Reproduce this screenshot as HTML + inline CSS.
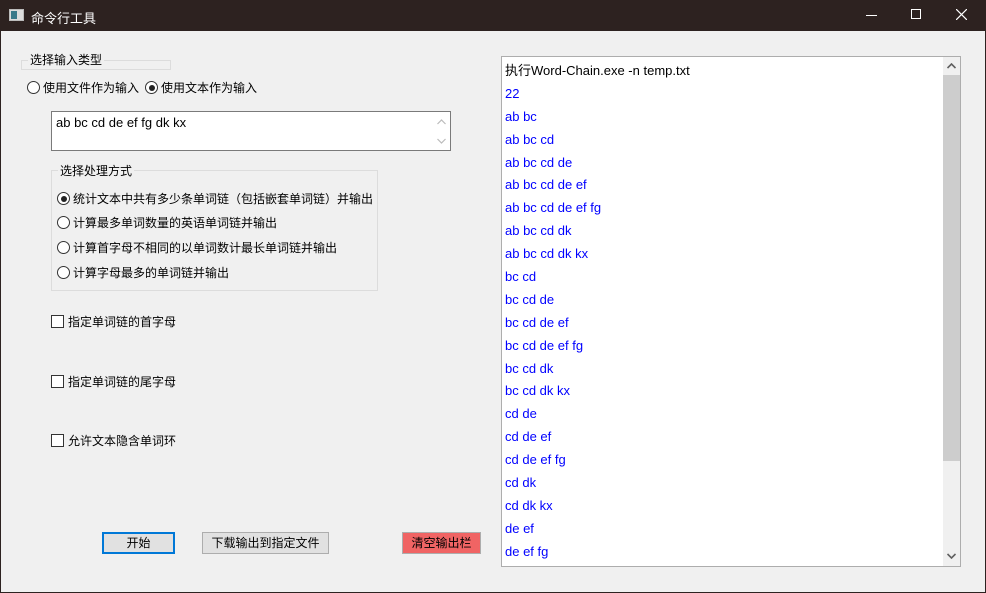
<!DOCTYPE html>
<html><head><meta charset="utf-8"><style>
*{margin:0;padding:0;box-sizing:border-box}
body{width:986px;height:593px;background:#f0f0f0;font-family:"Liberation Sans","Noto Sans CJK SC",sans-serif;font-size:12px;color:#000;position:relative;overflow:hidden}
.a{position:absolute;white-space:nowrap}
.tb{left:0;top:0;width:986px;height:31px;background:#2d2220;color:#fff}
.rad{display:inline-block;width:13px;height:13px;border:1px solid #333;border-radius:50%;background:#fff;vertical-align:-2px;margin-right:3px;position:relative}
.rad.on:after{content:"";position:absolute;left:2.5px;top:2.5px;width:6px;height:6px;border-radius:50%;background:#222}
.cb{display:inline-block;width:13px;height:13px;border:1px solid #333;background:#fff;vertical-align:-2px;margin-right:4px}
.btn{border:1px solid #adadad;background:#e1e1e1;text-align:center;line-height:20px;height:22px}
.out div{height:22.9px;line-height:22.9px;color:#0000ff;font-size:13px}
</style></head><body>
<div class="a tb">
 <div class="a" style="left:9px;top:9px;width:15px;height:12px;background:#ddd;border:1px solid #bbb"><div style="position:absolute;left:1px;top:1px;width:6px;height:8px;background:#3a7a8a"></div></div>
 <div class="a" style="left:31px;top:8px;font-size:13px">命令行工具</div>
 <div class="a" style="left:866px;top:15px;width:11px;height:1px;background:#fff"></div>
 <div class="a" style="left:911px;top:9px;width:10px;height:10px;border:1px solid #fff"></div>
 <svg class="a" style="left:956px;top:9px" width="11" height="11"><path d="M0 0L11 11M11 0L0 11" stroke="#fff" stroke-width="1.2"/></svg>
</div>
<div class="a" style="left:0;top:31px;width:1px;height:562px;background:#2d2220"></div>
<div class="a" style="left:985px;top:31px;width:1px;height:562px;background:#2d2220"></div>
<div class="a" style="left:0;top:592px;width:986px;height:1px;background:#2d2220"></div>

<div class="a" style="left:21px;top:60px;width:150px;height:10px;border:1px solid #dcdcdc"></div>
<div class="a" style="left:28px;top:51px;background:#f0f0f0;padding:0 2px">选择输入类型</div>
<div class="a" style="left:27px;top:79px"><span class="rad"></span>使用文件作为输入</div>
<div class="a" style="left:145px;top:79px"><span class="rad on"></span>使用文本作为输入</div>
<div class="a" style="left:51px;top:111px;width:400px;height:40px;border:1px solid #7a7a7a;background:#fff">
 <div class="a" style="left:4px;top:3px;font-size:13px">ab bc cd de ef fg dk kx</div>
 <svg class="a" style="left:385px;top:7px" width="9" height="6"><path d="M0.5 5L4.5 1L8.5 5" fill="none" stroke="#bbb" stroke-width="1.2"/></svg>
 <svg class="a" style="left:385px;top:26px" width="9" height="6"><path d="M0.5 1L4.5 5L8.5 1" fill="none" stroke="#bbb" stroke-width="1.2"/></svg>
</div>
<div class="a" style="left:51px;top:170px;width:327px;height:121px;border:1px solid #dcdcdc"></div>
<div class="a" style="left:58px;top:162px;background:#f0f0f0;padding:0 2px">选择处理方式</div>
<div class="a" style="left:57px;top:190px"><span class="rad on"></span>统计文本中共有多少条单词链（包括嵌套单词链）并输出</div>
<div class="a" style="left:57px;top:214px"><span class="rad"></span>计算最多单词数量的英语单词链并输出</div>
<div class="a" style="left:57px;top:239px"><span class="rad"></span>计算首字母不相同的以单词数计最长单词链并输出</div>
<div class="a" style="left:57px;top:264px"><span class="rad"></span>计算字母最多的单词链并输出</div>
<div class="a" style="left:51px;top:313px"><span class="cb"></span>指定单词链的首字母</div>
<div class="a" style="left:51px;top:373px"><span class="cb"></span>指定单词链的尾字母</div>
<div class="a" style="left:51px;top:432px"><span class="cb"></span>允许文本隐含单词环</div>

<div class="a btn" style="left:102px;top:532px;width:73px;border:2px solid #0078d7;line-height:18px">开始</div>
<div class="a btn" style="left:202px;top:532px;width:127px">下载输出到指定文件</div>
<div class="a btn" style="left:402px;top:532px;width:79px;background:#f06464">清空输出栏</div>

<div class="a" style="left:501px;top:56px;width:460px;height:511px;border:1px solid #adadad;background:#fff;overflow:hidden">
 <div class="a out" style="left:3px;top:3px">
  <div style="color:#000">执行Word-Chain.exe -n temp.txt</div>
  <div>22</div><div>ab bc</div><div>ab bc cd</div><div>ab bc cd de</div><div>ab bc cd de ef</div><div>ab bc cd de ef fg</div><div>ab bc cd dk</div><div>ab bc cd dk kx</div><div>bc cd</div><div>bc cd de</div><div>bc cd de ef</div><div>bc cd de ef fg</div><div>bc cd dk</div><div>bc cd dk kx</div><div>cd de</div><div>cd de ef</div><div>cd de ef fg</div><div>cd dk</div><div>cd dk kx</div><div>de ef</div><div>de ef fg</div>
 </div>
 <div class="a" style="left:441px;top:0;width:17px;height:509px;background:#f0f0f0">
  <svg class="a" style="left:4px;top:6px" width="9" height="6"><path d="M0.5 5L4.5 1L8.5 5" fill="none" stroke="#606060" stroke-width="1.6"/></svg>
  <div class="a" style="left:0;top:18px;width:17px;height:386px;background:#cdcdcd"></div>
  <svg class="a" style="left:4px;top:496px" width="9" height="6"><path d="M0.5 1L4.5 5L8.5 1" fill="none" stroke="#606060" stroke-width="1.6"/></svg>
 </div>
</div>
</body></html>
